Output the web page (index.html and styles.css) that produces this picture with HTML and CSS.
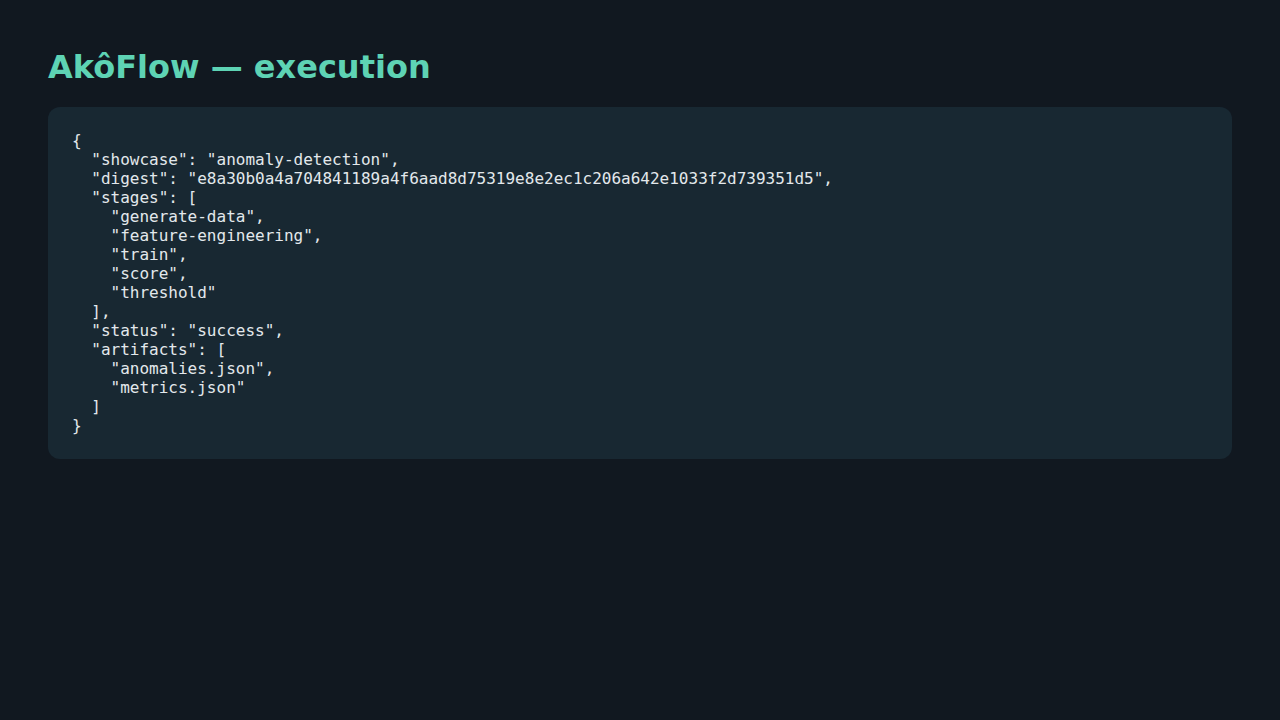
FILE: index.html
```html
<!DOCTYPE html>
<html lang="en">
<head>
<meta charset="utf-8">
<title>AkôFlow — execution</title>
<link rel="stylesheet" href="styles.css">
</head>
<body>
<main class="page">
<h1 class="title">AkôFlow — execution</h1>
<pre class="code">{
  "showcase": "anomaly-detection",
  "digest": "e8a30b0a4a704841189a4f6aad8d75319e8e2ec1c206a642e1033f2d739351d5",
  "stages": [
    "generate-data",
    "feature-engineering",
    "train",
    "score",
    "threshold"
  ],
  "status": "success",
  "artifacts": [
    "anomalies.json",
    "metrics.json"
  ]
}</pre>
</main>
</body>
</html>
```
FILE: styles.css
```css
html, body {
  margin: 0;
  background: #111820;
}
.page {
  padding: 48px;
}
.title {
  margin: 0 0 21px;
  font-family: "DejaVu Sans", sans-serif;
  font-weight: bold;
  font-size: 32px;
  color: #5ed3b4;
}
.code {
  margin: 0;
  padding: 24px;
  background: #182832;
  border-radius: 12px;
  font-family: "DejaVu Sans Mono", monospace;
  font-size: 16px;
  line-height: 19px;
  color: #e3e8ec;
}
```
